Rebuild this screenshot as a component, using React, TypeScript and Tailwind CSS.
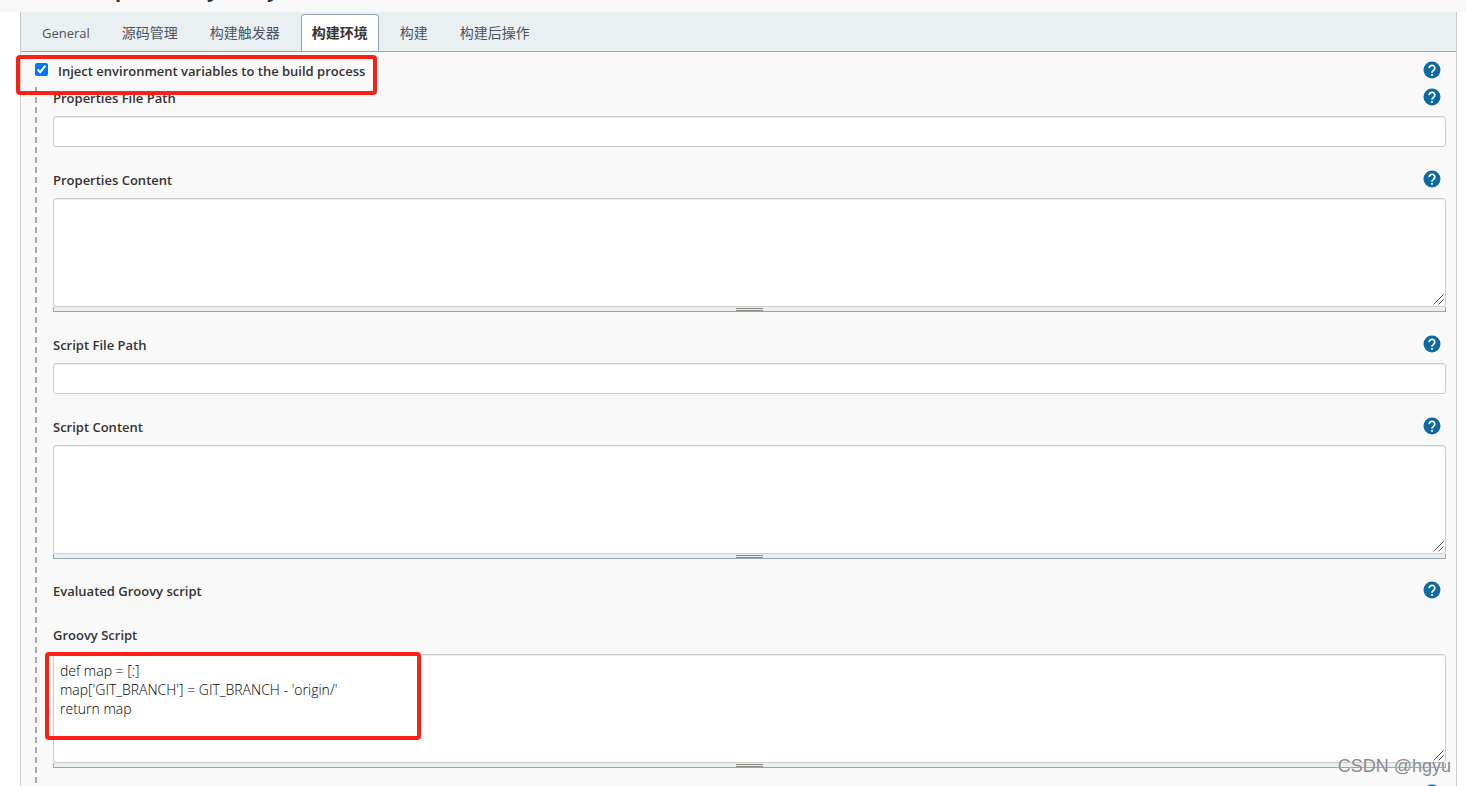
import { useState } from "react";

const tabs = ["General", "源码管理", "构建触发器", "构建环境", "构建", "构建后操作"];

function HelpButton({ topic }: { topic: string }) {
  return (
    <button type="button" aria-label={`Help for ${topic}`} className="mr-[5px] size-4.5 shrink-0">
      <svg viewBox="0 0 24 24" className="size-full" fill="none">
        <circle cx="12" cy="12" r="11.3" fill="#0b6aa2" />
        <path
          d="M8.300 9.500a3.700 3.700 0 1 1 5.900 2.900c-1.400 1-2.200 1.700-2.200 3.400"
          stroke="#fff"
          strokeWidth="2.300"
        />
        <path d="M10.800 17.200h2.400v2.400h-2.400z" fill="#fff" />
      </svg>
    </button>
  );
}

function FieldHeader({ id, label }: { id: string; label: string }) {
  return (
    <div className="flex h-5 items-center justify-between">
      <label htmlFor={id} className="pt-0.5 font-semibold">
        {label}
      </label>
      <HelpButton topic={label} />
    </div>
  );
}

function TextField({ id, label }: { id: string; label: string }) {
  return (
    <div className="mb-[22px]">
      <FieldHeader id={id} label={label} />
      <input
        id={id}
        type="text"
        className="mt-[9px] block h-[31px] w-full rounded-[3px] border border-[#ccc] bg-white px-1.5 shadow-[inset_0_1px_1px_rgba(0,0,0,0.075)] outline-none"
      />
    </div>
  );
}

function ScriptArea({ id, value }: { id: string; value?: string }) {
  return (
    <div className="mt-[9px]">
      <div className="relative">
        <textarea
          id={id}
          defaultValue={value}
          className="block h-[109px] w-full resize-none rounded-[3px] border border-[#ccc] bg-white px-1.5 py-1.5 text-sm leading-[19px] font-light text-black shadow-[inset_0_1px_1px_rgba(0,0,0,0.075)] outline-none"
        />
        <svg
          viewBox="0 0 11 11"
          className="pointer-events-none absolute right-[2px] bottom-[2px] size-[11px]"
          stroke="#555"
          fill="none"
        >
          <path d="M.5 10.500l10-10M5.500 10.500l5-5" />
        </svg>
      </div>
      <div className="flex h-[5px] items-start justify-center border-x border-b border-[#98a6ad] bg-[#eaeff2]">
        <div className="mt-px h-[3px] w-[27px] border-y border-[#888880]" />
      </div>
    </div>
  );
}

export default function App() {
  const [active, setActive] = useState("构建环境");
  const [inject, setInject] = useState(true);

  return (
    <div className="relative h-screen overflow-hidden bg-white font-['Open_Sans','Noto_Sans_CJK_SC',sans-serif] text-[13px] leading-5 text-[#333]">
      {/* tail of the page title, scrolled under the top edge */}
      <header className="flex h-3 items-end overflow-hidden bg-[#f8f8f8] pb-2.5 pl-[115px] text-xl leading-6 font-bold">
        <span className="w-[92px]">p</span>
        <span className="w-[60px]">y</span>
        <span>y</span>
      </header>

      <main className="mr-[9px] ml-5 min-h-screen border-x border-[#ccc] bg-[#f9f9f9]">
        <nav className="flex h-10 items-end border-b border-[#98a3ad] bg-[#eaeff2] pl-2.5">
          {tabs.map((tab) => (
            <button
              key={tab}
              type="button"
              onClick={() => setActive(tab)}
              className={
                tab === active
                  ? "h-[37px] rounded-t-[4px] border border-b-0 border-[#98a3ad] bg-white px-2.5 text-sm font-bold text-[#333]"
                  : "h-[38px] px-[11px] pt-0.5 text-sm text-[#4d545d] first:mr-2.5 first:text-[13px] nth-2:mr-2.5 nth-3:mr-2.5 nth-5:mx-2.5"
              }
            >
              {tab}
            </button>
          ))}
        </nav>

        <form className="pr-2.5 pl-3.5">
          <div className="flex h-[35px] items-start justify-between pt-[9px]">
            <label className="flex items-start font-semibold">
              <input
                type="checkbox"
                checked={inject}
                onChange={(e) => setInject(e.target.checked)}
                className="mt-0.5 mr-2.5 size-[13px]"
              />
              Inject environment variables to the build process
            </label>
            <HelpButton topic="Inject environment variables" />
          </div>

          <div className="flex">
            <div
              aria-hidden="true"
              className="w-0.5 shrink-0 bg-[repeating-linear-gradient(to_bottom,#aaa_0,#aaa_6px,transparent_6px,transparent_10px)]"
            />
            <div className="ml-4 grow">
              <TextField id="properties-path" label="Properties File Path" />
              <div className="mb-[22px]">
                <FieldHeader id="properties-content" label="Properties Content" />
                <ScriptArea id="properties-content" />
              </div>
              <TextField id="script-path" label="Script File Path" />
              <div className="mb-[21px]">
                <FieldHeader id="script-content" label="Script Content" />
                <ScriptArea id="script-content" />
              </div>
              <div className="mb-[25px]">
                <FieldHeader id="groovy-script" label="Evaluated Groovy script" />
              </div>
              <label htmlFor="groovy-script" className="block font-semibold">
                Groovy Script
              </label>
              <ScriptArea
                id="groovy-script"
                value={"def map = [:]\nmap['GIT_BRANCH'] = GIT_BRANCH - 'origin/'\nreturn map"}
              />
              <div className="h-4" />
            </div>
          </div>
          <div className="flex justify-end">
            <HelpButton topic="the next build step" />
          </div>
        </form>
      </main>

      <div className="pointer-events-none absolute top-[55px] left-4 h-10 w-[361px] rounded-[4px] border-4 border-[#ff2015]" />
      <div className="pointer-events-none absolute top-[652px] left-[45px] h-[88px] w-[376px] rounded-[4px] border-4 border-[#ff2015]" />
      <span className="pointer-events-none absolute right-[15px] bottom-2 font-['Liberation_Sans',sans-serif] text-lg leading-6 text-[#8a8a8a] [text-shadow:0_0_1px_#fff]">
        CSDN @hgyu
      </span>
    </div>
  );
}
